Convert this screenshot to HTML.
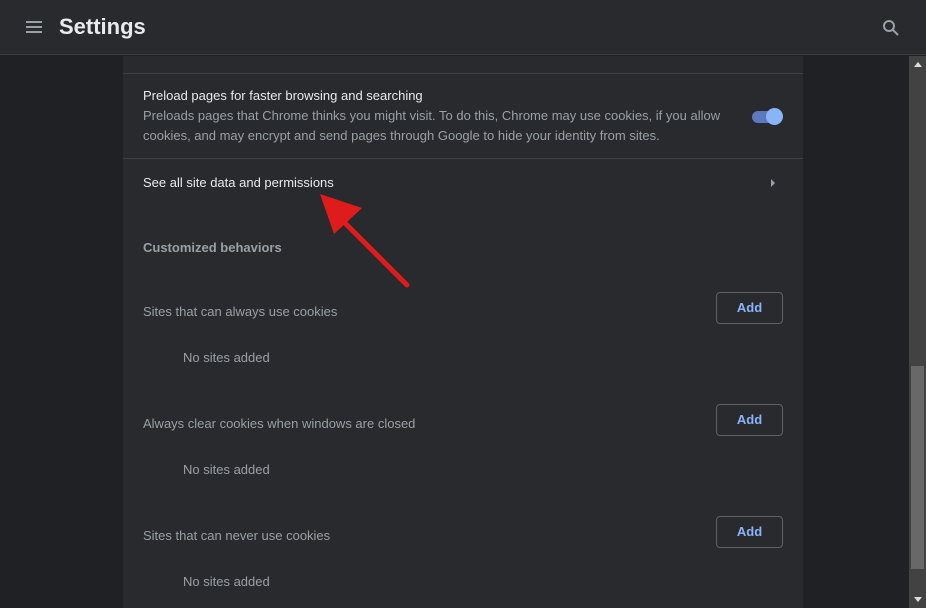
<!DOCTYPE html>
<html><head><style>
*{margin:0;padding:0;box-sizing:border-box}
body{width:926px;height:608px;background:#202124;font-family:"Liberation Sans",Arial,sans-serif;overflow:hidden;position:relative}
.hdr{position:absolute;left:0;top:0;width:926px;height:55px;background:#292a2d;border-bottom:1px solid #3c3c3f}
.hdr .t{position:absolute;left:59px;top:14px;color:#e8eaed;font-size:22px;font-weight:bold}
.card{position:absolute;left:123px;top:56px;width:680px;height:552px;background:#292a2d}
.sb{position:absolute;left:909px;top:56px;width:17px;height:552px;background:#424242}
.th{position:absolute;left:911px;top:366px;width:13px;height:203px;background:#686868}
.a{position:absolute;color:#e8eaed;font-size:13px}
.s{position:absolute;color:#9aa0a6;font-size:13px}
.hr{position:absolute;left:123px;width:680px;height:1px;background:#3f4043}
.btn{position:absolute;left:716px;width:67px;height:32px;border:1px solid #5f6368;border-radius:4px;color:#8ab4f8;font-size:13px;font-weight:bold;text-align:center;line-height:29px}
</style></head><body>
<div class="hdr">
<div style="position:absolute;left:26px;top:21px;width:16px;height:2px;background:#9aa0a6;box-shadow:0 5px 0 #9aa0a6,0 10px 0 #9aa0a6"></div>
<div class="t">Settings</div>
<svg style="position:absolute;left:882px;top:19px" width="18" height="18" viewBox="0 0 18 18"><circle cx="7" cy="7" r="5" fill="none" stroke="#9aa0a6" stroke-width="2"/><path d="M11 11l5 5" stroke="#9aa0a6" stroke-width="2"/></svg>
</div>
<div class="card"></div>
<div class="hr" style="top:73px"></div>
<div class="a" style="left:143px;top:88px">Preload pages for faster browsing and searching</div>
<div class="s" style="left:143px;top:106px;line-height:20px">Preloads pages that Chrome thinks you might visit. To do this, Chrome may use cookies, if you allow<br>cookies, and may encrypt and send pages through Google to hide your identity from sites.</div>
<div style="position:absolute;left:752px;top:111px;width:28px;height:12px;border-radius:6px;background:#5e7abf"></div>
<div style="position:absolute;left:766px;top:108px;width:17px;height:17px;border-radius:50%;background:#8ab4f8"></div>
<div class="hr" style="top:158px"></div>
<div class="a" style="left:143px;top:175px">See all site data and permissions</div>
<div style="position:absolute;left:771px;top:179px;border-left:4px solid #9aa0a6;border-top:4px solid transparent;border-bottom:4px solid transparent"></div>
<div class="s" style="left:143px;top:240px;font-weight:bold">Customized behaviors</div>
<div class="s" style="left:143px;top:304px">Sites that can always use cookies</div>
<div class="btn" style="top:292px">Add</div>
<div class="s" style="left:183px;top:350px">No sites added</div>
<div class="s" style="left:143px;top:416px">Always clear cookies when windows are closed</div>
<div class="btn" style="top:404px">Add</div>
<div class="s" style="left:183px;top:462px">No sites added</div>
<div class="s" style="left:143px;top:528px">Sites that can never use cookies</div>
<div class="btn" style="top:516px">Add</div>
<div class="s" style="left:183px;top:574px">No sites added</div>
<div class="sb"></div><div class="th"></div>
<div style="position:absolute;left:914px;top:62px;border-bottom:5px solid #ddd;border-left:4px solid transparent;border-right:4px solid transparent"></div>
<div style="position:absolute;left:914px;top:597px;border-top:5px solid #ddd;border-left:4px solid transparent;border-right:4px solid transparent"></div>
<svg style="position:absolute;left:0;top:0" width="926" height="608"><path d="M407 285L340 218" stroke="#e01b1b" stroke-width="5" stroke-linecap="round"/><path d="M320 194L362 208L334 234Z" fill="#e01b1b"/></svg>
</body></html>
